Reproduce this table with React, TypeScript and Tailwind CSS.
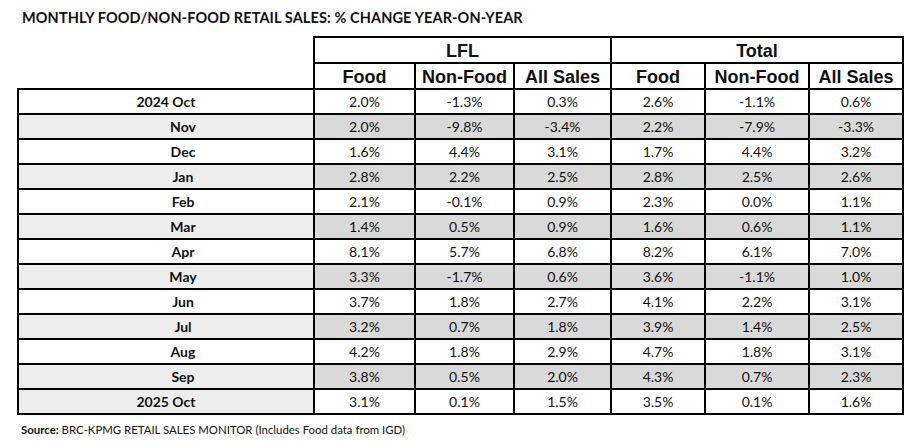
const rows: { label: string; year?: boolean; shade: boolean; cells: string[] }[] = [
  { label: "2024 Oct", year: true, shade: false, cells: ["2.0%", "-1.3%", "0.3%", "2.6%", "-1.1%", "0.6%"] },
  { label: "Nov", shade: true, cells: ["2.0%", "-9.8%", "-3.4%", "2.2%", "-7.9%", "-3.3%"] },
  { label: "Dec", shade: false, cells: ["1.6%", "4.4%", "3.1%", "1.7%", "4.4%", "3.2%"] },
  { label: "Jan", shade: true, cells: ["2.8%", "2.2%", "2.5%", "2.8%", "2.5%", "2.6%"] },
  { label: "Feb", shade: false, cells: ["2.1%", "-0.1%", "0.9%", "2.3%", "0.0%", "1.1%"] },
  { label: "Mar", shade: true, cells: ["1.4%", "0.5%", "0.9%", "1.6%", "0.6%", "1.1%"] },
  { label: "Apr", shade: false, cells: ["8.1%", "5.7%", "6.8%", "8.2%", "6.1%", "7.0%"] },
  { label: "May", shade: true, cells: ["3.3%", "-1.7%", "0.6%", "3.6%", "-1.1%", "1.0%"] },
  { label: "Jun", shade: false, cells: ["3.7%", "1.8%", "2.7%", "4.1%", "2.2%", "3.1%"] },
  { label: "Jul", shade: true, cells: ["3.2%", "0.7%", "1.8%", "3.9%", "1.4%", "2.5%"] },
  { label: "Aug", shade: false, cells: ["4.2%", "1.8%", "2.9%", "4.7%", "1.8%", "3.1%"] },
  { label: "Sep", shade: true, cells: ["3.8%", "0.5%", "2.0%", "4.3%", "0.7%", "2.3%"] },
  { label: "2025 Oct", year: true, shade: false, cells: ["3.1%", "0.1%", "1.5%", "3.5%", "0.1%", "1.6%"] },
];

const subHeads = ["Food", "Non-Food", "All Sales", "Food", "Non-Food", "All Sales"];

export default function App() {
  return (
    <div className="w-[915px] h-[441px] bg-white text-[#111] overflow-hidden">
      <h1 className="pl-[22px] pt-[7px] h-[36px] font-['Lato',sans-serif] font-bold text-[14.5px] tracking-[0.1px]">
        MONTHLY FOOD/NON-FOOD RETAIL SALES: % CHANGE YEAR-ON-YEAR
      </h1>

      <table className="ml-[17px] w-[886px] table-fixed border-collapse">
        <colgroup>
          <col className="w-[296px]" />
          <col className="w-[101px]" />
          <col className="w-[99px]" />
          <col className="w-[97px]" />
          <col className="w-[94px]" />
          <col className="w-[104px]" />
          <col className="w-[94px]" />
        </colgroup>
        <thead className="font-['Liberation_Sans',Arial,sans-serif] font-bold text-[18px] leading-none">
          <tr className="h-[26px]">
            <th className="border-0" />
            <th colSpan={3} className="border-2 border-black text-center align-middle pt-[2px]">
              LFL
            </th>
            <th colSpan={3} className="border-2 border-black text-center align-middle pt-[2px]">
              Total
            </th>
          </tr>
          <tr className="h-[26px]">
            <th className="border-0" />
            {subHeads.map((h, i) => (
              <th key={i} className="border-2 border-black text-center align-middle pt-[2px] whitespace-nowrap">
                {h}
              </th>
            ))}
          </tr>
        </thead>
        <tbody className="font-['Lato',sans-serif] text-[14px] leading-none">
          {rows.map((r) => (
            <tr key={r.label} className="h-[25px]">
              <td
                className={`border-2 border-black text-center align-middle font-bold pt-[1px] ${
                  r.year ? "" : "pl-[34px]"
                } ${r.shade || r.label === "2025 Oct" ? "bg-[#ededed]" : "bg-white"}`}
              >
                {r.label}
              </td>
              {r.cells.map((c, i) => (
                <td
                  key={i}
                  className={`border-2 border-black text-center align-middle pt-[1px] ${
                    r.shade ? "bg-[#d9d9d9]" : "bg-white"
                  }`}
                >
                  {c}
                </td>
              ))}
            </tr>
          ))}
        </tbody>
      </table>

      <p className="pl-[21px] pt-[9px] font-['Lato',sans-serif] text-[11.4px] leading-none">
        <span className="font-bold">Source:</span> BRC-KPMG RETAIL SALES MONITOR (Includes Food data from IGD)
      </p>
    </div>
  );
}
